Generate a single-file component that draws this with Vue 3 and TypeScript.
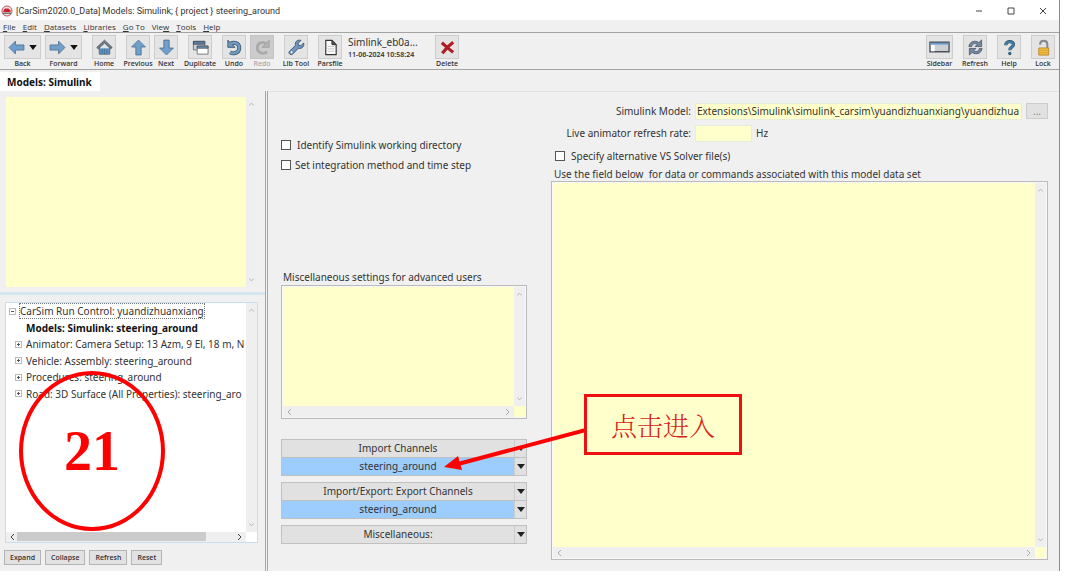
<script setup lang="ts">
import { ref } from 'vue'

interface Menu { pre: string; key: string; post: string }
interface TreeItem { text: string; sign: string; current?: boolean }
interface Link { title: string; value?: string }

const menus: Menu[] = [
  { pre: '', key: 'F', post: 'ile' },
  { pre: '', key: 'E', post: 'dit' },
  { pre: '', key: 'D', post: 'atasets' },
  { pre: '', key: 'L', post: 'ibraries' },
  { pre: '', key: 'G', post: 'o To' },
  { pre: 'Vie', key: 'w', post: '' },
  { pre: '', key: 'T', post: 'ools' },
  { pre: '', key: 'H', post: 'elp' },
]

const tools: string[][] = [
  ['Back', 'Forward'],
  ['Home'],
  ['Previous', 'Next'],
  ['Duplicate'],
  ['Undo', 'Redo'],
  ['Lib Tool'],
  ['Parsfile', 'info'],
  ['Delete'],
]
const rightTools: string[] = ['Sidebar', 'Refresh', 'Help', 'Lock']

const tree: TreeItem[] = [
  { text: 'Models: Simulink: steering_around', sign: '', current: true },
  { text: 'Animator: Camera Setup: 13 Azm, 9 El, 18 m, N', sign: '+' },
  { text: 'Vehicle: Assembly: steering_around', sign: '+' },
  { text: 'Procedures: steering_around', sign: '+' },
  { text: 'Road: 3D Surface (All Properties): steering_aro', sign: '+' },
]

const links: Link[] = [
  { title: 'Import Channels', value: 'steering_around' },
  { title: 'Import/Export: Export Channels', value: 'steering_around' },
  { title: 'Miscellaneous:' },
]

const treeButtons = ['Expand', 'Collapse', 'Refresh', 'Reset']

const notes = ref('')
const misc = ref('')
const commands = ref('')
const model = ref('Extensions\\Simulink\\simulink_carsim\\yuandizhuanxiang\\yuandizhua')
const rate = ref('')
const workDir = ref(false)
const integration = ref(false)
const solver = ref(false)
</script>

<template>
  <div class="page">
    <div class="window">
      <header class="titlebar">
        <svg class="logo" viewBox="0 0 12 12">
          <circle cx="6" cy="6" r="5" fill="#f4e4e4" stroke="#c05058" stroke-width="1" />
          <path d="M2.500 7V5.500L4 3.500h3.500L9.500 5.500V7z" fill="#c8202c" />
          <path d="M2 8.200h8" stroke="#555" stroke-width="1.200" />
        </svg>
        <h1>[CarSim2020.0_Data] Models: Simulink; { project } steering_around</h1>
        <div class="winbtns">
          <button aria-label="Minimize"><svg viewBox="0 0 8 8"><path d="M1 4h6" /></svg></button>
          <button aria-label="Maximize"><svg viewBox="0 0 8 8"><path d="M1 1h6v6H1z" /></svg></button>
          <button aria-label="Close"><svg viewBox="0 0 8 8"><path d="M1 1l6 6M7 1L1 7" /></svg></button>
        </div>
      </header>

      <nav class="menubar">
        <button v-for="m in menus" :key="m.key + m.post">{{ m.pre }}<u>{{ m.key }}</u>{{ m.post }}</button>
      </nav>

      <div class="toolbar">
        <div class="tools">
          <div v-for="(group, gi) in tools" :key="gi" class="group">
            <template v-for="t in group" :key="t">
              <div v-if="t === 'info'" class="info">
                <strong>Simlink_eb0a...</strong>
                <span>11-06-2024 10:58:24</span>
              </div>
              <button v-else class="tool" :class="{ wide: t === 'Back' || t === 'Forward' }" :disabled="t === 'Redo'">
                <span class="face">
                  <svg v-if="t === 'Back'" viewBox="0 0 16 16"><path class="blue" d="M1 8l6-6v3.600h8v4.800H7V14z" /></svg>
                  <svg v-else-if="t === 'Forward'" viewBox="0 0 16 16"><path class="blue" d="M15 8L9 2v3.600H1v4.800h8V14z" /></svg>
                  <svg v-else-if="t === 'Home'" viewBox="0 0 18 18">
                    <path d="M3.500 8v8h11V8L9 3z" fill="#dde5ec" stroke="#4c5258" />
                    <path d="M4 10h10v6H4z" fill="#5c8fbd" />
                    <path d="M6.500 10v6M9 10v6M11.500 10v6" stroke="#456f96" stroke-width=".7" />
                    <path d="M.8 9L9 1.200 17.200 9l-1.700 1.400L9 4.300 2.500 10.400z" fill="#748088" stroke="#444a50" stroke-width=".8" />
                  </svg>
                  <svg v-else-if="t === 'Previous'" viewBox="0 0 16 16"><path class="blue" d="M8 1l6.500 6.500H10.500V15h-5V7.500h-4z" /></svg>
                  <svg v-else-if="t === 'Next'" viewBox="0 0 16 16"><path class="blue" d="M8 15L1.500 8.500h4V1h5v7.500h4z" /></svg>
                  <svg v-else-if="t === 'Duplicate'" viewBox="0 0 18 18">
                    <path d="M1.500 2.500h12v9h-12z" fill="#cfd4d8" stroke="#6a7076" />
                    <path d="M1.500 2.500h12v3h-12z" fill="#567fa8" stroke="#4c5460" />
                    <path d="M5.500 7.500h11.500v8.500H5.500z" fill="#fff" stroke="#777" />
                    <path d="M5.500 7.500H17v2.200H5.500z" fill="#6b9ac6" stroke="#4c5460" />
                  </svg>
                  <svg v-else-if="t === 'Undo'" viewBox="0 0 18 18">
                    <path d="M5 5C8 3 14 4 14 9.500S7.500 16.300 4.300 14.200" fill="none" stroke="#3f5468" stroke-width="4.200" />
                    <path d="M2 1.200v7.600h7.500z" fill="#6c9cc5" stroke="#3f5468" />
                    <path d="M5 5C8 3 14 4 14 9.500S7.500 16.300 4.300 14.200" fill="none" stroke="#6c9cc5" stroke-width="2.600" />
                  </svg>
                  <svg v-else-if="t === 'Redo'" viewBox="0 0 18 18">
                    <path d="M13 5.200C9 2 3.500 4 3.500 9.500S10 16.500 14 13.500" fill="none" stroke="#aaa" stroke-width="3" />
                    <path d="M16 1.200v7.600H8.500z" fill="#b4b4b4" stroke="#a2a2a2" />
                  </svg>
                  <svg v-else-if="t === 'Lib Tool'" viewBox="0 0 18 18">
                    <path d="M16.500 4.200l-3 3-2.300-.5-.5-2.200 3-3C9.500.300 7 3.300 8 6.800L1.500 13c-1.500 2 1 4.700 3.200 3.200L11 9.800c3.700 1 6.700-2 5.500-5.600z" fill="#6c97c0" stroke="#42576c" />
                    <circle cx="3.800" cy="14" r="1" fill="#fff" />
                  </svg>
                  <svg v-else-if="t === 'Parsfile'" viewBox="0 0 18 18">
                    <path d="M4 1.500h6.500l4.500 4.500v10.500H4z" fill="#fafafa" stroke="#333" stroke-width="1.200" />
                    <path d="M10.500 1.500V6H15z" fill="#555" stroke="#333" />
                    <path d="M6 8h7M6 10.500h7M6 13h7" stroke="#bbb" stroke-width=".8" />
                  </svg>
                  <svg v-else viewBox="0 0 18 18">
                    <path d="M3 4C6 6.500 11 11 15 14M15 3.500C11 6.500 6.500 11 3.500 15" fill="none" stroke="#b01c20" stroke-width="3.400" />
                  </svg>
                  <svg v-if="t === 'Back' || t === 'Forward'" class="drop" viewBox="0 0 9 6"><path d="M0 0h9L4.500 6z" /></svg>
                </span>
                <span class="cap">{{ t }}</span>
              </button>
            </template>
          </div>
        </div>
        <div class="tools">
          <button v-for="t in rightTools" :key="t" class="tool" :class="{ mid: t === 'Sidebar' }">
            <span class="face">
              <svg v-if="t === 'Sidebar'" class="panel" viewBox="0 0 22 12">
                <path d="M1 1h20v10H1z" fill="#ccd0d4" stroke="#4a5058" stroke-width="1.400" />
                <path d="M1.500 1.500h19v2h-19z" fill="#6a9ccc" />
                <path d="M2 4h4v6.500H2z" fill="#fff" />
              </svg>
              <svg v-else-if="t === 'Refresh'" viewBox="0 0 18 18">
                <path d="M2 8C2.500 2.500 9 .8 12.500 3.800L15.500 1v7H8.500l2.300-2.400C8.500 4 5.500 5 5 8z" fill="#71889f" stroke="#43525f" stroke-width=".8" />
                <path d="M16 10c-.5 5.500-7 7.200-10.500 4.200L2.500 17v-7h7l-2.300 2.400C9.500 14 12.500 13 13 10z" fill="#71889f" stroke="#43525f" stroke-width=".8" />
              </svg>
              <svg v-else-if="t === 'Help'" viewBox="0 0 18 18">
                <path d="M5 6.500C5 1.500 13.500 1.800 13.200 6 13 8.500 9.300 8.700 9.300 12" fill="none" stroke="#31546b" stroke-width="3.400" />
                <path d="M5 6.300C5 2 13 2 13 6 12.800 8.300 9.300 8.700 9.300 11.600" fill="none" stroke="#3d83a8" stroke-width="2" />
                <circle cx="9.300" cy="15.300" r="1.800" fill="#31647e" />
              </svg>
              <svg v-else viewBox="0 0 18 18">
                <path d="M5.500 6V5c0-4 7.500-4 7.500 0v5" fill="none" stroke="#888c90" stroke-width="2.200" />
                <path d="M4 9.500h10.500V17H4z" fill="#f2bd43" stroke="#b98a2c" />
                <path d="M4.500 12h9.500M4.500 14.500h9.500" stroke="#dda032" />
              </svg>
            </span>
            <span class="cap">{{ t }}</span>
          </button>
        </div>
      </div>

      <div class="tabs"><button class="tab">Models: Simulink</button></div>

      <div class="body">
        <aside class="side">
          <div class="notes">
            <textarea v-model="notes" aria-label="Notes"></textarea>
            <div class="vbar">
              <svg viewBox="0 0 6 4"><path d="M0 4l3-3 3 3" /></svg>
              <svg viewBox="0 0 6 4"><path d="M0 0l3 3 3-3" /></svg>
            </div>
          </div>
          <div class="splitter"></div>
          <div class="treebox">
            <div class="treeview">
              <ul class="tree">
                <li class="root"><i class="sign minus"></i><span>CarSim Run Control: yuandizhuanxiang</span></li>
                <li v-for="n in tree" :key="n.text" :class="{ current: n.current }">
                  <i class="sign" :class="{ plus: n.sign, none: !n.sign }"></i><span>{{ n.text }}</span>
                </li>
              </ul>
            </div>
            <div class="vbar">
              <svg viewBox="0 0 6 4"><path d="M0 4l3-3 3 3" /></svg>
              <svg viewBox="0 0 6 4"><path d="M0 0l3 3 3-3" /></svg>
            </div>
            <div class="hbar dark">
              <svg viewBox="0 0 4 6"><path d="M4 0L1 3l3 3" /></svg>
              <div class="track"><div class="thumb"></div></div>
              <svg viewBox="0 0 4 6"><path d="M0 0l3 3-3 3" /></svg>
            </div>
          </div>
          <div class="treebtns">
            <button v-for="b in treeButtons" :key="b">{{ b }}</button>
          </div>
          <div class="ring">21</div>
        </aside>

        <main class="main">
          <section class="left">
            <div class="checks">
              <label class="check wideGap"><input v-model="workDir" type="checkbox" />Identify Simulink working directory</label>
              <label class="check"><input v-model="integration" type="checkbox" />Set integration method and time step</label>
            </div>
            <div class="miscfield">
              <label for="misc">Miscellaneous settings for advanced users</label>
              <div class="area">
                <textarea id="misc" v-model="misc"></textarea>
                <div class="vbar">
                  <svg viewBox="0 0 6 4"><path d="M0 4l3-3 3 3" /></svg>
                  <svg viewBox="0 0 6 4"><path d="M0 0l3 3 3-3" /></svg>
                </div>
                <div class="hbar">
                  <svg viewBox="0 0 4 6"><path d="M4 0L1 3l3 3" /></svg>
                  <svg viewBox="0 0 4 6"><path d="M0 0l3 3-3 3" /></svg>
                </div>
              </div>
            </div>
            <div class="links">
              <div v-for="l in links" :key="l.title" class="link">
                <div class="linkrow">
                  <button class="name">{{ l.title }}</button>
                  <button class="arrow" :aria-label="l.title + ' menu'"><svg viewBox="0 0 8 5"><path d="M0 0h8L4 5z" /></svg></button>
                </div>
                <div v-if="l.value" class="linkrow">
                  <button class="name value">{{ l.value }}</button>
                  <button class="arrow" :aria-label="l.value + ' menu'"><svg viewBox="0 0 8 5"><path d="M0 0h8L4 5z" /></svg></button>
                </div>
              </div>
            </div>
          </section>

          <section class="right">
            <div class="field">
              <label for="model">Simulink Model:</label>
              <input id="model" v-model="model" type="text" />
              <button class="browse" aria-label="Browse">...</button>
            </div>
            <div class="field">
              <label for="rate">Live animator refresh rate:</label>
              <input id="rate" v-model="rate" class="short" type="text" />
              <span>Hz</span>
            </div>
            <label class="check solver"><input v-model="solver" type="checkbox" />Specify alternative VS Solver file(s)</label>
            <label class="hint" for="commands">Use the field below &nbsp;for data or commands associated with this model data set</label>
            <div class="area grow">
              <textarea id="commands" v-model="commands"></textarea>
              <div class="vbar">
                <svg viewBox="0 0 6 4"><path d="M0 4l3-3 3 3" /></svg>
                <svg viewBox="0 0 6 4"><path d="M0 0l3 3 3-3" /></svg>
              </div>
              <div class="hbar">
                <svg viewBox="0 0 4 6"><path d="M4 0L1 3l3 3" /></svg>
                <svg viewBox="0 0 4 6"><path d="M0 0l3 3-3 3" /></svg>
              </div>
            </div>
          </section>

          <svg class="pointer" viewBox="0 0 142 44">
            <path d="M142 3L14 37" fill="none" stroke="#f00" stroke-width="4" />
            <path d="M0 40l14-11 4 14z" fill="#f00" />
          </svg>
          <div class="callout">点击进入</div>
        </main>
      </div>
    </div>
  </div>
</template>

<style>
body { margin: 0; background: #fff; }
</style>

<style scoped>
* { box-sizing: border-box; }
.page {
  min-height: 100vh;
  display: flex;
  padding: 0 20px 13px 0;
  font-family: "Noto Sans", "Open Sans", sans-serif;
  font-size: 10px;
  line-height: 16px;
  color: #333;
}
button {
  font: inherit;
  color: inherit;
  padding: 0;
  border: 0;
  background: none;
  white-space: nowrap;
}
textarea {
  display: block;
  width: 100%;
  height: 100%;
  min-width: 0;
  border: 0;
  padding: 2px;
  resize: none;
  outline: 0;
  background: #ffffcb;
  font: inherit;
}
.window {
  flex: 1;
  min-width: 0;
  display: flex;
  flex-direction: column;
  background: #f0f0f0;
  border-right: 1px solid #8c8c8c;
}
.titlebar {
  display: flex;
  align-items: center;
  height: 20px;
  padding: 2px 12px 0 1px;
  background: #fff;
}
.logo { width: 12px; height: 12px; margin-right: 3px; }
h1 { flex: 1; margin: 0; font: 400 9px/16px Roboto, sans-serif; white-space: nowrap; }
.winbtns { display: flex; gap: 24px; }
.winbtns button { width: 8px; height: 8px; display: flex; }
.winbtns svg { width: 8px; height: 8px; fill: none; stroke: #444; stroke-width: 1; }

.menubar { display: flex; gap: 7px; height: 12px; padding-left: 3px; font: 400 8px/11px "Open Sans", sans-serif; }

.toolbar {
  display: flex;
  justify-content: space-between;
  height: 38px;
  padding: 2px 4px 0;
  border: solid #a4a4a4;
  border-width: 1px 0;
}
.tools { display: flex; gap: 10px; }
.group { display: flex; gap: 4px; }
.tool { width: 24px; display: flex; flex-direction: column; align-items: center; }
.tool.wide { width: 37px; }
.tool.mid { width: 27px; }
.face {
  width: 100%;
  height: 24px;
  display: flex;
  align-items: center;
  justify-content: center;
  gap: 4px;
  background: #e4e4e4;
  border: 1px solid #cdcdcd;
}
.face svg { width: 17px; height: 17px; flex: none; }
.face .drop { width: 8px; height: 5px; fill: #111; }
.face .panel { width: 21px; height: 12px; }
.blue { fill: #6f9fca; stroke: #4d6f90; stroke-width: 0.8; }
.cap { font: 600 7px/10px "Open Sans", sans-serif; }
.tool:disabled { color: #aaa; }
.tool:disabled .face { background: #ccc; border-color: #c4c4c4; }
.info { display: flex; flex-direction: column; padding-left: 2px; width: 79px; white-space: nowrap; }
.info strong { font-size: 10px; font-weight: 400; line-height: 15px; }
.info span { font: 600 7px/9px "Noto Sans", sans-serif; }

.tabs { height: 21px; padding-top: 2px; }
.tab { height: 19px; padding: 0 8px 0 7px; background: #fff; color: #111; font-weight: 700; }

.body { flex: 1; display: flex; min-height: 0; }
.side {
  position: relative;
  width: 268px;
  flex: none;
  display: flex;
  flex-direction: column;
  border-right: 3px double #a8a8a8;
}
.notes { display: grid; grid-template-columns: 1fr 10px; height: 190px; margin: 6px 9px 5px 6px; }
.splitter { height: 3px; background: #d5e5f0; }
.treebox {
  flex: 1;
  min-height: 0;
  display: grid;
  grid-template-columns: minmax(0, 1fr) 11px;
  grid-template-rows: 1fr 10px;
  margin: 7px 7px 7px 5px;
  border: 1px solid #c5dff0;
  background: #fff;
}
.treeview { overflow: hidden; }
.tree {
  display: grid;
  grid-template-rows: repeat(6, 1fr);
  height: 99px;
  margin: 0;
  padding: 0;
  list-style: none;
  white-space: nowrap;
}
.tree li { display: flex; align-items: center; padding-left: 9px; }
.tree li.root { padding-left: 3px; }
.tree li span { padding: 0 1px; }
.tree .root span { border: 1px dotted #777; line-height: 14px; padding: 0; }
.tree .current { font-weight: 700; color: #111; }
.sign {
  width: 7px;
  height: 7px;
  margin-right: 3px;
  border: 1px solid #bbb;
  background: linear-gradient(#555, #555) center / 3px 1px no-repeat;
}
.sign.plus { background: linear-gradient(#555, #555) center / 3px 1px no-repeat, linear-gradient(#555, #555) center / 1px 3px no-repeat; }
.sign.none { border-color: transparent; background: none; }
.treebtns { display: flex; gap: 4px; padding: 0 4px 6px; }
.treebtns button {
  height: 15px;
  padding: 0 5px;
  border: 1px solid #b4b4b4;
  background: #e2e2e2;
  font: 600 7px/12px "Open Sans", sans-serif;
}

.vbar { display: flex; flex-direction: column; align-items: center; justify-content: space-between; padding: 5px 0; background: #efefef; }
.hbar { display: flex; align-items: center; justify-content: space-between; padding: 0 4px; background: #efefef; }
.vbar svg { width: 5px; height: 4px; fill: none; stroke: #aaa; }
.hbar svg { width: 4px; height: 6px; fill: none; stroke: #aaa; }
.hbar.dark svg { stroke: #444; }
.track { flex: 1; height: 100%; margin: 0 32px 0 3px; }
.thumb { height: 9px; background: #cbcbcb; }

.main {
  position: relative;
  flex: 1;
  min-width: 0;
  display: grid;
  grid-template-columns: 246px minmax(0, 1fr);
  column-gap: 24px;
  padding: 0 11px 11px 13px;
  border-top: 1px solid #e2e2e2;
}
.left, .right { display: flex; flex-direction: column; min-width: 0; }
.checks { padding-top: 45px; display: flex; flex-direction: column; gap: 4px; }
.check { display: flex; align-items: center; gap: 4px; white-space: nowrap; }
.check.wideGap { gap: 6px; }
.check input { appearance: none; width: 10px; height: 10px; margin: 0; border: 1px solid #555; background: #fff; flex: none; }
.miscfield { margin-top: 97px; }
.miscfield label { display: block; padding-left: 2px; line-height: 15px; }
.area {
  display: grid;
  grid-template-columns: minmax(0, 1fr) 11px;
  grid-template-rows: minmax(0, 1fr) 11px;
  height: 134px;
  padding: 1px;
  border: 1px solid #bbb;
  background: #ffffcb;
  box-shadow: inset 0 0 0 1px #f8f8f8;
}
.area.grow { flex: 1; height: auto; min-height: 0; }
.links { display: flex; flex-direction: column; gap: 6px; margin-top: 20px; }
.link { border: 1px solid #c0c0c0; background: #e1e1e1; }
.linkrow { display: flex; height: 17px; }
.linkrow + .linkrow { height: 18px; border-top: 1px solid #c0c0c0; }
.name { flex: 1; line-height: 17px; }
.name.value { background: #9dccff; }
.arrow { width: 12px; display: flex; align-items: center; justify-content: center; border-left: 1px solid #ccc; }
.arrow svg { width: 8px; height: 5px; fill: #222; }

.right { padding-top: 8px; }
.field { display: flex; align-items: center; height: 22px; gap: 4px; }
.field label { width: 140px; text-align: right; white-space: nowrap; }
.field input {
  flex: 1;
  min-width: 0;
  height: 17px;
  padding: 0 1px;
  border: 1px solid #e3eedc;
  background: #ffffcb;
  font: inherit;
  color: inherit;
}
.field input.short { flex: none; width: 57px; }
.browse { width: 22px; height: 16px; border: 1px solid #ccc; background: #e1e1e1; color: #888; line-height: 12px; }
.solver { height: 23px; padding-left: 4px; gap: 6px; }
.hint { padding-left: 3px; line-height: 14px; white-space: nowrap; }

.ring {
  position: absolute;
  left: 19px;
  top: 280px;
  width: 146px;
  height: 160px;
  display: flex;
  align-items: center;
  justify-content: center;
  border: 4px solid #f00;
  border-radius: 50%;
  color: #f00;
  font: 700 56px/60px "Liberation Serif", serif;
}
.callout {
  position: absolute;
  left: 316px;
  top: 302px;
  width: 158px;
  height: 61px;
  display: flex;
  align-items: center;
  justify-content: center;
  border: 3px solid #ee1010;
  color: #d92020;
  font: 300 26px/32px "Noto Serif CJK SC", "Noto Sans CJK SC", serif;
}
.pointer { position: absolute; left: 176px; top: 335px; width: 142px; height: 44px; }
</style>
